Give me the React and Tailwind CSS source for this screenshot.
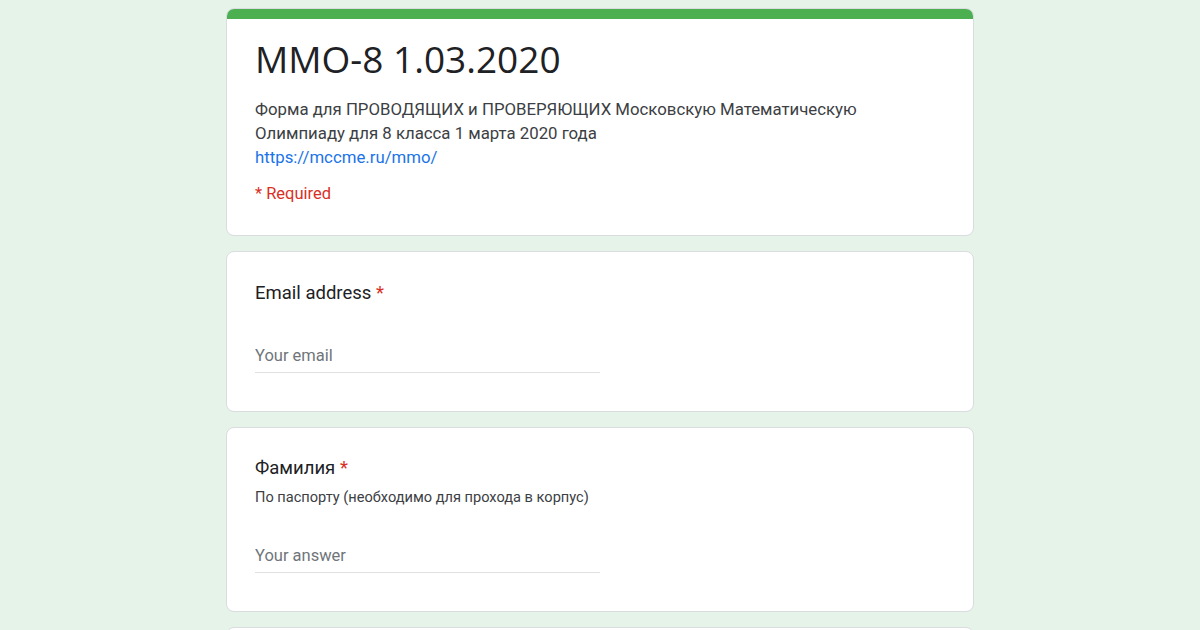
import React from "react";

function Question({ title, help, placeholder, className }) {
  return (
    <div className={`bg-white border border-[#dadce0] rounded-[8px] px-[28px] ${className}`}>
      <div className="text-[18.5px] leading-[24px] text-[#202124]">
        {title} <span className="text-[#d93025]">*</span>
      </div>
      {help && (
        <div className="mt-[7px] text-[14.6px] leading-[20px] text-[#3c4043]">{help}</div>
      )}
      <div className={`${help ? "mt-[37px]" : "mt-[39px]"} w-[345px] border-b border-[#e0e0e0] pb-[4px]`}>
        <input
          placeholder={placeholder}
          className="w-full text-[16.5px] leading-[24px] text-[#202124] placeholder:text-[#70757a] outline-none bg-transparent"
        />
      </div>
    </div>
  );
}

export default function App() {
  return (
    <div
      className="w-[1200px] h-[630px] overflow-hidden bg-[#e6f3e8]"
      style={{ fontFamily: "Roboto, 'Liberation Sans', sans-serif" }}
    >
      <div className="w-[748px] mx-auto pt-[8px] flex flex-col gap-[15px]">
        {/* header card */}
        <div className="bg-white border border-[#dadce0] rounded-[8px] overflow-hidden">
          <div className="h-[11px] bg-[#4caf50] -mx-px -mt-px"></div>
          <div className="px-[28px] pt-[18px] pb-[29px]">
            <h1
              className="text-[37px] leading-[44px] text-[#202124]"
              style={{ fontFamily: "'Open Sans', Roboto, sans-serif" }}
            >
              MMO-8 1.03.2020
            </h1>
            <div className="mt-[16px] text-[16.8px] leading-[24px] text-[#3c4043] w-[640px]">
              Форма для ПРОВОДЯЩИХ и ПРОВЕРЯЮЩИХ Московскую Математическую
              <br />
              Олимпиаду для 8 класса 1 марта 2020 года
              <br />
              <a href="#" className="text-[#1a73e8]">https://mccme.ru/mmo/</a>
            </div>
            <div className="mt-[13px] text-[16.5px] leading-[24px] text-[#d93025]">* Required</div>
          </div>
        </div>

        <Question title="Email address" placeholder="Your email" className="pt-[29px] pb-[38px]" />
        <Question
          title="Фамилия"
          help="По паспорту (необходимо для прохода в корпус)"
          placeholder="Your answer"
          className="pt-[28px] pb-[38px]"
        />
        <div className="bg-white border border-[#dadce0] rounded-[8px] h-[200px]"></div>
      </div>
    </div>
  );
}
